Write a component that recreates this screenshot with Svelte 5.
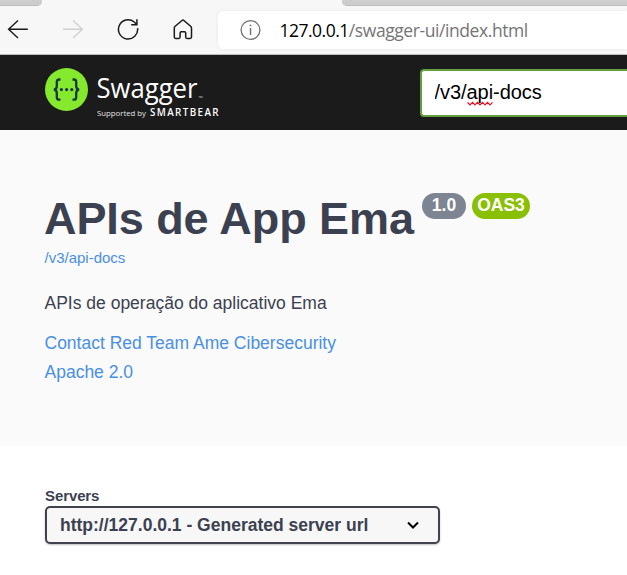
<script>
  let specUrl = $state('/v3/api-docs');
  const links = ['Contact Red Team Ame Cibersecurity', 'Apache 2.0'];
</script>

<div class="window">
  <header class="browser">
    <div class="tabs"><div class="tab left"></div><div class="tab right"></div></div>
    <div class="toolbar">
      <nav>
        <svg width="22" height="22" viewBox="0 0 22 22" stroke="#1a1a1a" stroke-width="1.4"><path d="M20.8 11.2H1.5M11 2.4 1.6 11.2l9.4 8.8" /></svg>
        <svg width="22" height="22" viewBox="0 0 22 22" stroke="#d0d0d0" stroke-width="1.4"><path d="M1 11.2h19.5M11 2.4 20.4 11.2 11 20" /></svg>
        <svg width="22" height="22" viewBox="0 0 22 22" stroke="#1a1a1a" stroke-width="1.5"><path d="M20.6 10.2A9.6 9.6 0 1 1 17.2 4l2.6 2.5M19.9 1.2v5.6h-5.7" /></svg>
        <svg width="22" height="22" viewBox="0 0 22 22" stroke="#1a1a1a" stroke-width="1.5" stroke-linejoin="round"><path d="M10 2.5 3.2 8.3Q2.3 9.1 2.3 10.1v8.9Q2.3 20.4 3.7 20.4h3.1Q8.1 20.4 8.1 19v-4.1Q8.1 13.7 9.3 13.7h3.2Q13.7 13.7 13.7 14.9v4.1Q13.7 20.4 15 20.4h3.1Q19.5 20.4 19.5 19v-8.9Q19.5 9.1 18.6 8.3L11.9 2.5Q10.9 1.6 10 2.5Z" /></svg>
      </nav>
      <div class="address">
        <svg width="22" height="22" viewBox="0 0 22 22" stroke="#707070" stroke-width="1.3"><circle cx="11.5" cy="11" r="9.4" /><path d="M11.5 9v7" stroke-width="1.4" /><circle cx="11.5" cy="6.4" r=".9" fill="#707070" stroke="none" /></svg>
        <div class="url"><b>127.0.0.1</b>/swagger-ui/index.html</div>
      </div>
    </div>
  </header>

  <div class="topbar">
    <svg class="logo" width="180" height="52" viewBox="0 0 180 52">
      <circle cx="21.5" cy="21.5" r="21.5" fill="#85ea2d" />
      <g fill="none" stroke="#173647" stroke-width="2.3">
        <path d="M15.5 11.5h-1.3q-2.4 0-2.4 2.5v4q0 3.4-3 3.6 3 .2 3 3.6v4q0 2.5 2.4 2.5h1.3" />
        <path d="M27.5 11.5h1.3q2.4 0 2.4 2.5v4q0 3.4 3 3.6-3 .2-3 3.6v4q0 2.5-2.4 2.5h-1.3" />
      </g>
      <g fill="#173647"><circle cx="16.4" cy="21.6" r="1.6" /><circle cx="21.6" cy="21.6" r="1.6" /><circle cx="26.8" cy="21.6" r="1.6" /></g>
      <g fill="#fff">
        <text x="51.5" y="30" font-size="27.5" textLength="101" lengthAdjust="spacingAndGlyphs">Swagger</text>
        <text x="153.4" y="31.5" font-size="5.5" fill="#bbb">™</text>
        <text x="52" y="48" font-size="7.8" fill="#e4e4e4" textLength="49" lengthAdjust="spacingAndGlyphs">Supported by</text>
        <text x="105" y="48" font-size="10.5" font-weight="600" textLength="70" lengthAdjust="spacingAndGlyphs" class="brand">SMARTBEAR</text>
      </g>
    </svg>
    <div class="spec">
      <input bind:value={specUrl} aria-label="API definition" />
      <svg width="28" height="5" viewBox="0 0 28 5"><path d="M.5 1.5 3 3.8 5.5 1.3 8 3.8l2.5-2.5L13 3.8l2.5-2.5L18 3.8l2.5-2.5L23 3.8l2.5-2.5" stroke="#e81123" stroke-width="1.2" fill="none" /></svg>
    </div>
  </div>

  <section class="info">
    <div class="heading">
      <h1>APIs de App Ema</h1>
      <span class="badge version">1.0</span>
      <span class="badge oas">OAS3</span>
    </div>
    <a class="definition">/v3/api-docs</a>
    <p>APIs de operação do aplicativo Ema</p>
    <div class="links">
      {#each links as link}<a>{link}</a>{/each}
    </div>
  </section>

  <section class="servers">
    <div class="label">Servers</div>
    <div class="select">
      <span>http://127.0.0.1 - Generated server url</span>
      <svg width="14" height="10" viewBox="0 0 14 10"><path d="m2 2.5 5 5 5-5" stroke="#000" stroke-width="2" fill="none" /></svg>
    </div>
  </section>
</div>

<style>
  .window { width: 627px; height: 575px; overflow: hidden; background: #fff; font-family: "Liberation Sans", Arial, sans-serif; color: #3b4151; }
  .browser { box-sizing: border-box; height: 55px; background: #f7f7f7; border-bottom: 1px solid #bdbdbd; }
  .tabs { display: flex; justify-content: space-between; height: 6px; }
  .tab { box-sizing: border-box; background: #cdcdcd; border-bottom: 1px solid #bcbcbc; }
  .left { width: 42px; border-bottom-right-radius: 5px; }
  .right { width: 285px; border-bottom-left-radius: 5px; }
  .toolbar { display: flex; height: 48px; align-items: flex-start; }
  nav { display: flex; width: 211px; padding: 12px 0 0 7px; gap: 33px; box-sizing: content-box; }
  nav svg, .address svg { fill: none; flex: none; }
  .address { flex: 1; display: flex; align-items: center; height: 38px; margin-top: 5px; padding-left: 21px; gap: 18.5px; background: #fff; border-radius: 5px 0 0 5px; box-shadow: 0 0 4px #00000010; }
  .url { font: 17.5px/24px "Open Sans", "Noto Sans", sans-serif; letter-spacing: -.42px; color: #757575; white-space: nowrap; }
  .url b { font-weight: 400; color: #000; letter-spacing: -.5px; }
  .topbar { display: flex; height: 75px; box-sizing: border-box; padding: 13px 0 0 45px; background: #1b1b1b; }
  .logo { flex: none; font-family: "Open Sans", "Noto Sans", sans-serif; }
  .brand { letter-spacing: 1.5px; }
  .spec { position: relative; margin-left: 195px; width: 207px; height: 48px; margin-top: 1px; flex: none; }
  input { display: block; width: 207px; height: 48px; box-sizing: border-box; padding: 0 0 2px 12.5px; border: 2px solid #62a03f; border-right: 0; border-radius: 4px 0 0 4px; background: #fff; color: #000; font: 20px "Liberation Sans", Arial, sans-serif; letter-spacing: -.05px; outline: 0; }
  .spec svg { position: absolute; left: 47px; top: 32px; }
  .info { height: 316px; box-sizing: border-box; padding: 62px 0 0 44.5px; background: #fafafa; }
  .heading { display: flex; height: 54px; align-items: flex-start; }
  h1 { margin: 1px 0 0 -.5px; width: 378px; font-size: 45px; line-height: 52px; letter-spacing: -.07px; white-space: nowrap; }
  .badge { margin-top: 1px; height: 26px; box-sizing: border-box; border-radius: 13px; color: #fff; font-size: 17.5px; font-weight: 700; line-height: 25px; text-align: center; }
  .version { width: 44px; background: #7d8492; }
  .oas { width: 58px; margin-left: 6px; background: #89bf04; }
  a { color: #4990e2; }
  .definition { display: block; font-size: 15px; line-height: 24px; }
  p { margin: 20px 0 0; font-size: 17.5px; line-height: 26px; }
  .links { display: flex; flex-direction: column; margin-top: 13px; font-size: 17.5px; line-height: 29px; }
  .servers { padding: 40px 0 0 45px; }
  .label { height: 20px; font-size: 15px; font-weight: 700; line-height: 20px; letter-spacing: -.1px; }
  .select { display: flex; align-items: center; justify-content: space-between; box-sizing: border-box; width: 395px; height: 38px; padding: 0 18.5px 0 13px; border: 2px solid #41444e; border-radius: 5px; background: #f7f7f7; box-shadow: 0 1px 2px #00000040; font-size: 17.5px; font-weight: 700; }
</style>
